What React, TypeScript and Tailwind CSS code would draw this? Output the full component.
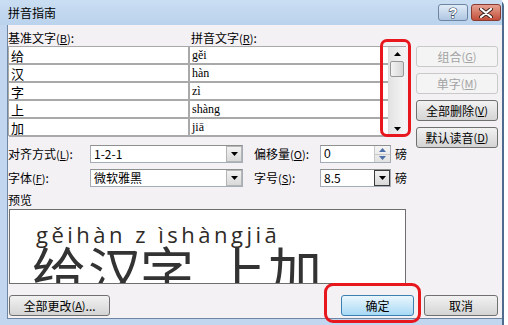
import React from "react"

const cjk = "font-['Noto_Sans_CJK_SC','Noto_Sans_CJK_JP',sans-serif]"

function Mn({ k }: { k: string }) {
  return (
    <span className="text-[11px]">
      (<span className="underline">{k}</span>)
    </span>
  )
}

function Btn({
  label,
  k,
  disabled,
  primary,
  className,
  tail,
}: {
  label: string
  k?: string
  disabled?: boolean
  primary?: boolean
  className?: string
  tail?: string
}) {
  const look = disabled
    ? "border-[#c9c9c9] bg-[#f4f4f4] text-[#a3a3a3]"
    : primary
      ? "border-[#3c7fb1] bg-gradient-to-b from-[#eaf6fd] to-[#a7d9f5] text-black"
      : "border-[#707070] bg-gradient-to-b from-[#f2f2f2] to-[#d4d4d4] text-black"
  return (
    <div
      className={`h-[21px] shrink-0 flex items-center justify-center rounded-[3px] border text-[12px] leading-none ${look} ${className ?? ""}`}
    >
      {label}
      {k && <Mn k={k} />}
      {tail}
    </div>
  )
}

function Arrow({ down, color = "#000" }: { down?: boolean; color?: string }) {
  return (
    <svg width="7" height="4" viewBox="0 0 7 4">
      <path d={down ? "M0 0h7L3.5 4z" : "M0 4h7L3.5 0z"} fill={color} />
    </svg>
  )
}

function Combo({ value, w, dark }: { value: string; w: string; dark?: boolean }) {
  return (
    <div
      className={`${w} h-[18px] flex items-stretch border border-[#a5acb5] border-t-[#8e8f8f] bg-white`}
    >
      <div className="flex-1 flex items-center pl-[3px] text-[12px] leading-none">{value}</div>
      <div
        className={`w-[16px] flex items-center justify-center border ${
          dark ? "border-[#3c3c3c]" : "border-[#b5b5b5]"
        } bg-gradient-to-b from-[#f2f2f2] to-[#d9d9d9]`}
      >
        <Arrow down />
      </div>
    </div>
  )
}

export default function App() {
  const rows = [
    ["给", "gěi"],
    ["汉", "hàn"],
    ["字", "zì"],
    ["上", "shàng"],
    ["加", "jiā"],
  ]
  const hanzi = [
    ["给", "w-[56px]"],
    ["汉", "w-[52px]"],
    ["字", "w-[72px]"],
    ["上", "w-[56px]"],
    ["加", "w-[56px]"],
  ]
  return (
    <div className={`w-[508px] h-[325px] bg-white relative overflow-hidden ${cjk} text-[12px] text-black`}>
      <div className="w-[504px] h-[325px] bg-[#c2d7ef] border-r-2 border-[#4f6c8e] rounded-tr-[6px]">
        {/* title bar */}
        <div className="h-[25px] flex items-center pl-[8px] pr-[1px] bg-gradient-to-b from-[#cadef3] to-[#bad2ec]">
          <span className="text-[12px] leading-none flex-1">拼音指南</span>
          <div className="w-[30px] h-[17px] rounded-[3px] border border-[#6d84a2] bg-gradient-to-b from-[#e0ebf7] to-[#afc6e2] flex items-center justify-center">
            <svg width="12" height="14" viewBox="0 0 12 14">
              <text
                x="6"
                y="12"
                textAnchor="middle"
                fontFamily="Liberation Sans"
                fontWeight="bold"
                fontSize="14"
                fill="#fff"
                stroke="#3a4a5e"
                strokeWidth="1.2"
                paintOrder="stroke"
              >
                ?
              </text>
            </svg>
          </div>
          <div className="w-[30px] h-[17px] ml-[3px] rounded-[3px] border border-[#8a3b30] bg-gradient-to-b from-[#e6a191] to-[#c14d3a] flex items-center justify-center">
            <svg width="14" height="10" viewBox="0 0 14 10">
              <path d="M2 1l10 8M12 1L2 9" stroke="#3b2520" strokeWidth="4" strokeLinecap="round" />
              <path d="M2 1l10 8M12 1L2 9" stroke="#fff" strokeWidth="2.2" strokeLinecap="round" />
            </svg>
          </div>
        </div>

        {/* client area */}
        <div className="h-[294px] ml-[7px] border-l border-b border-[#6f86a3] bg-[#f4f1f5]">
          {/* top area: buttons column may reach below the list */}
          <div className="h-[111px] flex items-start pt-[4px]">
            <div className="w-[398px]">
              <div className="h-[17px] flex items-center">
                <span className="w-[183px]">
                  基准文字<Mn k="B" />:
                </span>
                <span>
                  拼音文字<Mn k="R" />:
                </span>
              </div>
              <div className="h-[90px] flex border-t border-l border-[#a9a9a9]">
                <div className="w-[379px]">
                  {rows.map(([h, p]) => (
                    <div key={h} className="h-[18px] flex border-b-2 border-[#a9a9a9]">
                      <div className="w-[181px] bg-white pl-[2px] flex items-center text-[13px] leading-none border-r-2 border-[#a9a9a9]">
                        {h}
                      </div>
                      <div className="flex-1 bg-white pl-[2px] flex items-center font-['Liberation_Serif',serif] text-[12px] leading-none">
                        {p}
                      </div>
                    </div>
                  ))}
                </div>
                <div className="w-[17px] flex flex-col bg-gradient-to-r from-[#e3e3e3] to-[#f5f5f5] border-l border-[#dcdcdc]">
                  <div className="h-[14px] flex items-center justify-center">
                    <Arrow />
                  </div>
                  <div className="mx-[1px] h-[16px] rounded-[2px] border border-[#979797] bg-gradient-to-r from-[#f3f3f3] to-[#d6d6d6]" />
                  <div className="flex-1" />
                  <div className="h-[14px] flex items-center justify-center">
                    <Arrow down />
                  </div>
                </div>
              </div>
            </div>
            <div className="ml-[10px] w-[82px] flex flex-col gap-[6px] pt-[17px]">
              <Btn label="组合" k="G" disabled />
              <Btn label="单字" k="M" disabled />
              <Btn label="全部删除" k="V" />
              <Btn label="默认读音" k="D" />
            </div>
          </div>

          {/* options */}
          <div className="flex flex-col gap-[6px] mt-[9px]">
            <div className="flex items-center h-[18px]">
              <span className="w-[82px]">
                对齐方式<Mn k="L" />:
              </span>
              <Combo value="1-2-1" w="w-[153px]" />
              <span className="w-[66px] ml-[11px]">
                偏移量<Mn k="O" />:
              </span>
              <div className="w-[71px] h-[18px] flex border border-[#a5acb5] border-t-[#8e8f8f] bg-white">
                <div className="flex-1 flex items-center pl-[3px] font-['Liberation_Sans',sans-serif] leading-none">0</div>
                <div className="w-[16px] flex flex-col border-l border-[#c9c9c9] bg-gradient-to-b from-[#f5f5f5] to-[#e2e2e2]">
                  <div className="flex-1 flex items-center justify-center border-b border-[#c9c9c9]">
                    <Arrow color="#4d6fa7" />
                  </div>
                  <div className="flex-1 flex items-center justify-center">
                    <Arrow down color="#4d6fa7" />
                  </div>
                </div>
              </div>
              <span className="ml-[4px]">磅</span>
            </div>
            <div className="flex items-center h-[18px]">
              <span className="w-[82px]">
                字体<Mn k="F" />:
              </span>
              <Combo value="微软雅黑" w="w-[153px]" />
              <span className="w-[66px] ml-[11px]">
                字号<Mn k="S" />:
              </span>
              <Combo value="8.5" w="w-[71px]" dark />
              <span className="ml-[4px]">磅</span>
            </div>
          </div>

          {/* preview */}
          <div className="mt-[5px] h-[16px] flex items-center">预览</div>
          <div className="ml-[1px] mt-[1px] w-[397px] h-[75px] border border-[#6e6e6e] bg-white overflow-hidden pl-[26px] pt-[11px]">
            <div className="font-['Open_Sans',sans-serif] text-[22px] leading-[26px] tracking-[3.5px] text-[#2e2a26] whitespace-nowrap">
              gěihàn z ìshàngjiā
            </div>
            <div className="flex -ml-[4px] -mt-[5px]">
              {hanzi.map(([h, w]) => (
                <span key={h} className={`${w} shrink-0 text-[54px] leading-[56px] text-[#333]`}>
                  {h}
                </span>
              ))}
            </div>
          </div>

          {/* bottom buttons */}
          <div className="flex mt-[11px] pl-[1px]">
            <Btn label="全部更改" k="A" tail="..." className="w-[101px]" />
            <Btn label="确定" primary className="w-[73px] ml-[231px]" />
            <Btn label="取消" className="w-[74px] ml-[10px]" />
          </div>
        </div>
      </div>

      {/* red annotation marks */}
      <div className="absolute left-[380px] top-[39px] w-[31px] h-[98px] border-[3px] border-[#e8161d] rounded-[7px]" />
      <div className="absolute left-[324px] top-[283px] w-[97px] h-[40px] border-[3px] border-[#e8161d] rounded-[9px]" />
    </div>
  )
}
